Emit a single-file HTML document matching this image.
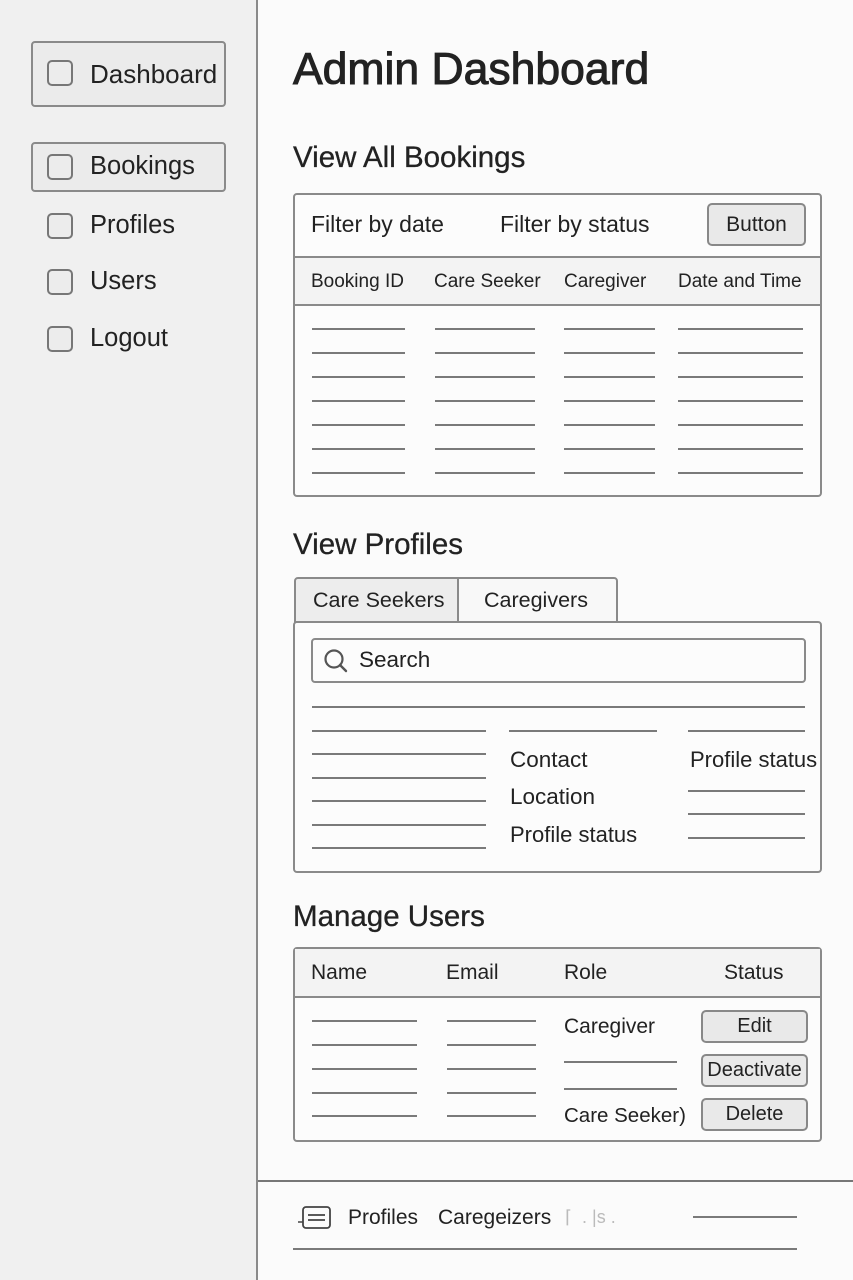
<!DOCTYPE html>
<html><head><meta charset="utf-8"><style>
*{margin:0;padding:0;box-sizing:border-box}
body{width:853px;height:1280px;position:relative;background:#fbfbfb;font-family:"Liberation Sans",sans-serif;color:#222;overflow:hidden}
.a{position:absolute;white-space:nowrap}
.l{position:absolute;height:2px;background:#7a7a7a}
.box{position:absolute;border:2px solid #8a8a8a;border-radius:4px;background:#fcfcfc}
.cb{position:absolute;width:26px;height:26px;border:2px solid #777;border-radius:5px;background:#ececec}
.t{position:absolute;font-size:22px;white-space:nowrap}
.h{position:absolute;font-size:29.5px;white-space:nowrap;-webkit-text-stroke:0.3px #222}
.btn{position:absolute;border:2px solid #888;border-radius:5px;background:#e9e9e9;font-size:20px;text-align:center}
</style></head><body>
<div class="a" style="left:0;top:0;width:258px;height:1280px;background:#f0f0f0;border-right:2px solid #8a8a8a"></div>
<div class="box" style="left:31px;top:41px;width:195px;height:66px;background:#ebebeb"></div>
<div class="cb" style="left:47px;top:60px"></div><div class="t" style="left:90px;top:59px;font-size:26px">Dashboard</div>
<div class="box" style="left:31px;top:142px;width:195px;height:50px;background:#ebebeb"></div>
<div class="cb" style="left:47px;top:154px"></div><div class="t" style="left:90px;top:152px;font-size:25.5px">Bookings</div>
<div class="cb" style="left:47px;top:213px"></div><div class="t" style="left:90px;top:211px;font-size:25.5px">Profiles</div>
<div class="cb" style="left:47px;top:269px"></div><div class="t" style="left:90px;top:267px;font-size:25.5px">Users</div>
<div class="cb" style="left:47px;top:326px"></div><div class="t" style="left:90px;top:324px;font-size:25.5px">Logout</div>

<div class="t" style="left:293px;top:45px;font-size:44.5px;color:#222;-webkit-text-stroke:1px #222">Admin Dashboard</div>
<div class="h" style="left:293px;top:141px">View All Bookings</div>
<div class="box" style="left:293px;top:193px;width:529px;height:304px"></div>
<div class="a" style="left:295px;top:256px;width:525px;height:50px;background:#f3f3f3;border-top:2px solid #8a8a8a;border-bottom:2px solid #8a8a8a"></div>
<div class="t" style="left:311px;top:211px;font-size:23px">Filter by date</div>
<div class="t" style="left:500px;top:211px;font-size:23px">Filter by status</div>
<div class="btn" style="left:707px;top:203px;width:99px;height:43px;line-height:39px;font-size:21px">Button</div>
<div class="t" style="left:311px;top:271px;font-size:19px">Booking ID</div>
<div class="t" style="left:434px;top:271px;font-size:19px">Care Seeker</div>
<div class="t" style="left:564px;top:271px;font-size:19px">Caregiver</div>
<div class="t" style="left:678px;top:271px;font-size:19px">Date and Time</div>
<div class="l" style="left:312px;top:328px;width:93px"></div><div class="l" style="left:435px;top:328px;width:100px"></div><div class="l" style="left:564px;top:328px;width:91px"></div><div class="l" style="left:678px;top:328px;width:125px"></div>
<div class="l" style="left:312px;top:352px;width:93px"></div><div class="l" style="left:435px;top:352px;width:100px"></div><div class="l" style="left:564px;top:352px;width:91px"></div><div class="l" style="left:678px;top:352px;width:125px"></div>
<div class="l" style="left:312px;top:376px;width:93px"></div><div class="l" style="left:435px;top:376px;width:100px"></div><div class="l" style="left:564px;top:376px;width:91px"></div><div class="l" style="left:678px;top:376px;width:125px"></div>
<div class="l" style="left:312px;top:400px;width:93px"></div><div class="l" style="left:435px;top:400px;width:100px"></div><div class="l" style="left:564px;top:400px;width:91px"></div><div class="l" style="left:678px;top:400px;width:125px"></div>
<div class="l" style="left:312px;top:424px;width:93px"></div><div class="l" style="left:435px;top:424px;width:100px"></div><div class="l" style="left:564px;top:424px;width:91px"></div><div class="l" style="left:678px;top:424px;width:125px"></div>
<div class="l" style="left:312px;top:448px;width:93px"></div><div class="l" style="left:435px;top:448px;width:100px"></div><div class="l" style="left:564px;top:448px;width:91px"></div><div class="l" style="left:678px;top:448px;width:125px"></div>
<div class="l" style="left:312px;top:472px;width:93px"></div><div class="l" style="left:435px;top:472px;width:100px"></div><div class="l" style="left:564px;top:472px;width:91px"></div><div class="l" style="left:678px;top:472px;width:125px"></div>

<div class="h" style="left:293px;top:528px">View Profiles</div>
<div class="box" style="left:294px;top:577px;width:165px;height:46px;background:#ededed;border-radius:4px 0 0 0"></div>
<div class="box" style="left:457px;top:577px;width:161px;height:46px;border-radius:0 4px 0 0;background:#f8f8f8"></div>
<div class="t" style="left:313px;top:588px;font-size:21.5px">Care Seekers</div>
<div class="t" style="left:484px;top:588px;font-size:21.5px">Caregivers</div>
<div class="box" style="left:293px;top:621px;width:529px;height:252px"></div>
<div class="box" style="left:311px;top:638px;width:495px;height:45px"></div>
<svg class="a" style="left:322px;top:647px" width="28" height="28" viewBox="0 0 28 28"><circle cx="12" cy="12" r="8.5" fill="none" stroke="#555" stroke-width="2.2"/><path d="M18 18l6 6" stroke="#555" stroke-width="2.4" stroke-linecap="round"/></svg>
<div class="t" style="left:359px;top:647px;font-size:22.5px">Search</div>
<div class="l" style="left:312px;top:706px;width:493px"></div>
<div class="l" style="left:312px;top:730px;width:174px"></div><div class="l" style="left:509px;top:730px;width:148px"></div><div class="l" style="left:688px;top:730px;width:117px"></div>
<div class="l" style="left:312px;top:753px;width:174px"></div>
<div class="l" style="left:312px;top:777px;width:174px"></div>
<div class="l" style="left:312px;top:800px;width:174px"></div>
<div class="l" style="left:312px;top:824px;width:174px"></div>
<div class="l" style="left:312px;top:847px;width:174px"></div>
<div class="l" style="left:688px;top:790px;width:117px"></div><div class="l" style="left:688px;top:813px;width:117px"></div><div class="l" style="left:688px;top:837px;width:117px"></div>
<div class="t" style="left:510px;top:747px;font-size:22.5px">Contact</div>
<div class="t" style="left:510px;top:784px;font-size:22.5px">Location</div>
<div class="t" style="left:510px;top:822px;font-size:22px">Profile status</div>
<div class="t" style="left:690px;top:747px;font-size:22px">Profile status</div>

<div class="h" style="left:293px;top:900px">Manage Users</div>
<div class="box" style="left:293px;top:947px;width:529px;height:195px"></div>
<div class="a" style="left:295px;top:949px;width:525px;height:49px;background:#f3f3f3;border-bottom:2px solid #8a8a8a"></div>
<div class="t" style="left:311px;top:961px;font-size:21px">Name</div>
<div class="t" style="left:446px;top:961px;font-size:21px">Email</div>
<div class="t" style="left:564px;top:961px;font-size:21px">Role</div>
<div class="t" style="left:724px;top:961px;font-size:21px">Status</div>
<div class="l" style="left:312px;top:1020px;width:105px"></div><div class="l" style="left:447px;top:1020px;width:89px"></div>
<div class="l" style="left:312px;top:1044px;width:105px"></div><div class="l" style="left:447px;top:1044px;width:89px"></div>
<div class="l" style="left:312px;top:1068px;width:105px"></div><div class="l" style="left:447px;top:1068px;width:89px"></div>
<div class="l" style="left:312px;top:1092px;width:105px"></div><div class="l" style="left:447px;top:1092px;width:89px"></div>
<div class="l" style="left:312px;top:1115px;width:105px"></div><div class="l" style="left:447px;top:1115px;width:89px"></div>
<div class="t" style="left:564px;top:1015px;font-size:21px">Caregiver</div>
<div class="l" style="left:564px;top:1061px;width:113px"></div><div class="l" style="left:564px;top:1088px;width:113px"></div>
<div class="t" style="left:564px;top:1104px;font-size:20.5px">Care Seeker)</div>
<div class="btn" style="left:701px;top:1010px;width:107px;height:33px;line-height:29px">Edit</div>
<div class="btn" style="left:701px;top:1054px;width:107px;height:33px;line-height:29px">Deactivate</div>
<div class="btn" style="left:701px;top:1098px;width:107px;height:33px;line-height:29px">Delete</div>

<div class="l" style="left:258px;top:1180px;width:595px;height:2px;background:#777"></div>
<svg class="a" style="left:296px;top:1204px" width="38" height="26" viewBox="0 0 38 26"><rect x="7" y="3" width="27" height="21" rx="3" fill="none" stroke="#444" stroke-width="1.8"/><path d="M12 11h17M12 16h17" stroke="#444" stroke-width="1.8"/><path d="M2 18h5" stroke="#444" stroke-width="1.5"/></svg>
<div class="t" style="left:348px;top:1206px;font-size:21px">Profiles</div>
<div class="t" style="left:438px;top:1206px;font-size:21px">Caregeizers</div>
<div class="t" style="left:565px;top:1207px;font-size:18px;color:#bbb">⌈ &nbsp;. |s .</div>
<div class="l" style="left:693px;top:1216px;width:104px"></div>
<div class="l" style="left:293px;top:1248px;width:504px;height:2px"></div>
</body></html>
